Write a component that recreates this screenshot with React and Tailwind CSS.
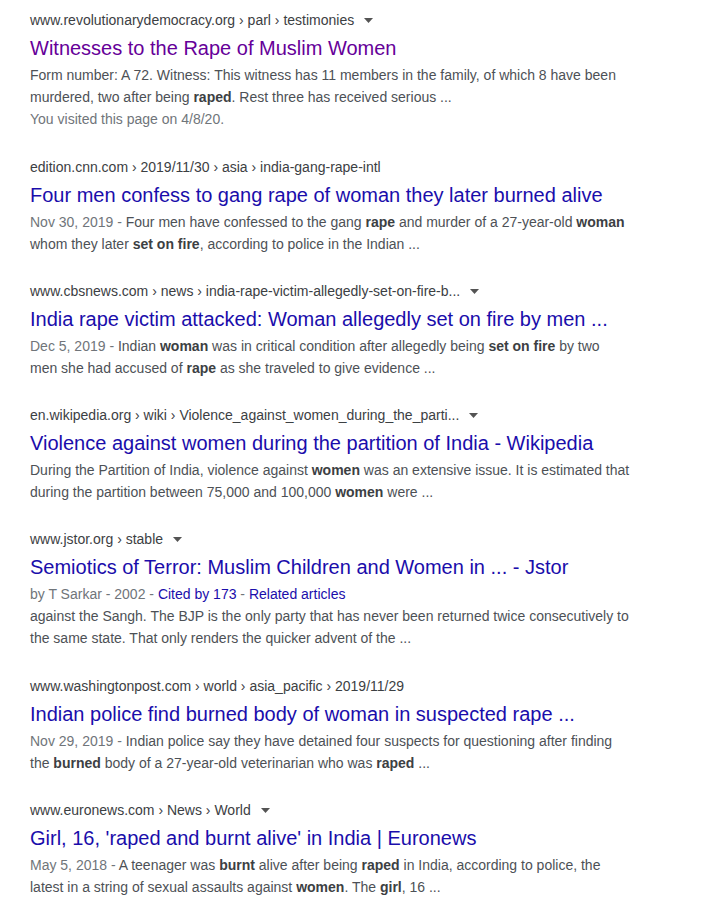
const RESULTS = [
  {
    crumbs: "www.revolutionarydemocracy.org › parl › testimonies",
    arrow: true,
    title: "Witnesses to the Rape of Muslim Women",
    visited: true,
    lines: [
      ["Form number: A 72. Witness: This witness has 11 members in the family, of which 8 have been"],
      ["murdered, two after being ", { b: "raped" }, ". Rest three has received serious ..."],
    ],
    note: "You visited this page on 4/8/20.",
  },
  {
    crumbs: "edition.cnn.com › 2019/11/30 › asia › india-gang-rape-intl",
    title: "Four men confess to gang rape of woman they later burned alive",
    lines: [
      [{ d: "Nov 30, 2019 - " }, "Four men have confessed to the gang ", { b: "rape" }, " and murder of a 27-year-old ", { b: "woman" }],
      ["whom they later ", { b: "set on fire" }, ", according to police in the Indian ..."],
    ],
  },
  {
    crumbs: "www.cbsnews.com › news › india-rape-victim-allegedly-set-on-fire-b...",
    arrow: true,
    title: "India rape victim attacked: Woman allegedly set on fire by men ...",
    lines: [
      [{ d: "Dec 5, 2019 - " }, "Indian ", { b: "woman" }, " was in critical condition after allegedly being ", { b: "set on fire" }, " by two"],
      ["men she had accused of ", { b: "rape" }, " as she traveled to give evidence ..."],
    ],
  },
  {
    crumbs: "en.wikipedia.org › wiki › Violence_against_women_during_the_parti...",
    arrow: true,
    title: "Violence against women during the partition of India - Wikipedia",
    lines: [
      ["During the Partition of India, violence against ", { b: "women" }, " was an extensive issue. It is estimated that"],
      ["during the partition between 75,000 and 100,000 ", { b: "women" }, " were ..."],
    ],
  },
  {
    crumbs: "www.jstor.org › stable",
    arrow: true,
    title: "Semiotics of Terror: Muslim Children and Women in ... - Jstor",
    meta: true,
    lines: [
      ["against the Sangh. The BJP is the only party that has never been returned twice consecutively to"],
      ["the same state. That only renders the quicker advent of the ..."],
    ],
  },
  {
    crumbs: "www.washingtonpost.com › world › asia_pacific › 2019/11/29",
    title: "Indian police find burned body of woman in suspected rape ...",
    lines: [
      [{ d: "Nov 29, 2019 - " }, "Indian police say they have detained four suspects for questioning after finding"],
      ["the ", { b: "burned" }, " body of a 27-year-old veterinarian who was ", { b: "raped" }, " ..."],
    ],
  },
  {
    crumbs: "www.euronews.com › News › World",
    arrow: true,
    title: "Girl, 16, 'raped and burnt alive' in India | Euronews",
    lines: [
      [{ d: "May 5, 2018 - " }, "A teenager was ", { b: "burnt" }, " alive after being ", { b: "raped" }, " in India, according to police, the"],
      ["latest in a string of sexual assaults against ", { b: "women" }, ". The ", { b: "girl" }, ", 16 ..."],
    ],
  },
];

function Arrow() {
  return (
    <svg width="9" height="5" viewBox="0 0 9 5" className="ml-[10px] mt-[1px] fill-[#545454]">
      <path d="M0 0h9L4.5 5z" />
    </svg>
  );
}

function Line({ parts }) {
  return (
    <div className="h-[22px] leading-[22px] whitespace-nowrap">
      {parts.map((p, i) => {
        if (typeof p === "string") return <span key={i}>{p}</span>;
        if (p.b) return <b key={i} className="font-bold text-[#3c4043]">{p.b}</b>;
        return <span key={i} className="text-[#70757a]">{p.d}</span>;
      })}
    </div>
  );
}

function Result({ r }) {
  const extra = r.meta || r.note;
  return (
    <div className={extra ? "mb-[26px]" : "mb-[25px]"}>
      <div className="flex h-[22px] items-center text-[14px] leading-[22px] text-[#3c4043]">
        <span>{r.crumbs}</span>
        {r.arrow && <Arrow />}
      </div>
      <div
        className={`pt-[4px] pb-[3px] text-[20px] leading-[26px] whitespace-nowrap ${
          r.visited ? "text-[#660099]" : "text-[#1a0dab]"
        }`}
      >
        {r.title}
      </div>
      <div className="text-[14px] text-[#4d5156]">
        {r.meta && (
          <div className="h-[22px] leading-[22px] text-[#70757a]">
            by T Sarkar - 2002 - <span className="text-[#1a0dab]">Cited by 173</span> -{" "}
            <span className="text-[#1a0dab]">Related articles</span>
          </div>
        )}
        {r.lines.map((l, i) => (
          <Line key={i} parts={l} />
        ))}
        {r.note && <div className="h-[22px] leading-[22px] text-[#70757a]">{r.note}</div>}
      </div>
    </div>
  );
}

export default function App() {
  return (
    <div className="min-h-[914px] w-[724px] bg-white pl-[30px] pt-[9px] font-['Liberation_Sans',Arial,sans-serif]">
      {RESULTS.map((r, i) => (
        <Result key={i} r={r} />
      ))}
    </div>
  );
}
